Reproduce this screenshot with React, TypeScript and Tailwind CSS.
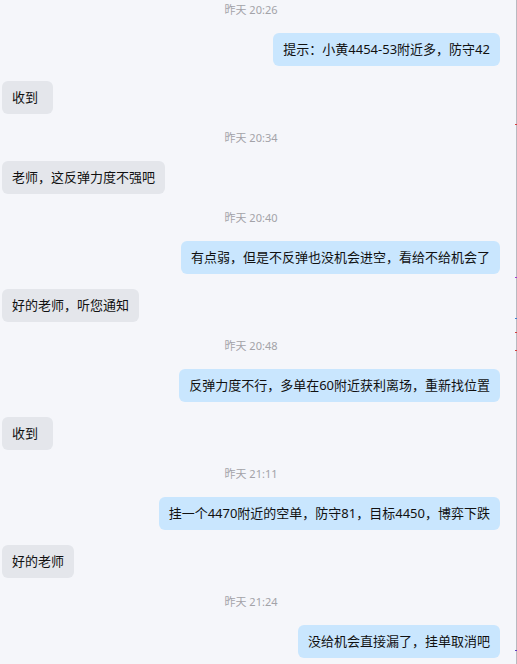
import React, { type ReactNode } from "react";

type Item =
    | { kind: "time"; text: string }
    | { kind: "sent"; text: string }
    | { kind: "recv"; text: string };

const items: Item[] = [
    { kind: "time", text: "昨天 20:26" },
    { kind: "sent", text: "提示：小黄4454-53附近多，防守42" },
    { kind: "recv", text: "收到" },
    { kind: "time", text: "昨天 20:34" },
    { kind: "recv", text: "老师，这反弹力度不强吧" },
    { kind: "time", text: "昨天 20:40" },
    { kind: "sent", text: "有点弱，但是不反弹也没机会进空，看给不给机会了" },
    { kind: "recv", text: "好的老师，听您通知" },
    { kind: "time", text: "昨天 20:48" },
    { kind: "sent", text: "反弹力度不行，多单在60附近获利离场，重新找位置" },
    { kind: "recv", text: "收到" },
    { kind: "time", text: "昨天 21:11" },
    { kind: "sent", text: "挂一个4470附近的空单，防守81，目标4450，博弈下跌" },
    { kind: "recv", text: "好的老师" },
    { kind: "time", text: "昨天 21:24" },
    { kind: "sent", text: "没给机会直接漏了，挂单取消吧" },
];

const Row = ({ item }: { item: Item }): ReactNode => {
    if (item.kind === "time") {
        return (
            <div className="h-[17px] text-center text-[11px] leading-[17px] text-[#a3a3a8]">
                {item.text}
            </div>
        );
    }
    const sent = item.kind === "sent";
    return (
        <div className={sent ? "flex justify-end" : "flex justify-start"}>
            <div
                className={
                    sent
                        ? "h-[33px] rounded-md bg-[#c9e6fe] px-[10px] text-[13px] leading-[33px] text-[#111111] whitespace-nowrap"
                        : "h-[33px] min-w-[51px] rounded-md bg-[#e4e6eb] px-[10px] text-[13px] leading-[33px] text-[#111111] whitespace-nowrap"
                }
            >
                {item.text}
            </div>
        </div>
    );
};

export default function App(): ReactNode {
    return (
        <div
            className="relative flex h-[664px] w-[517px] overflow-hidden bg-[#f5f6fa]"
            style={{ fontFamily: '"Noto Sans", "Noto Sans CJK SC", sans-serif' }}
        >
            <div className="flex flex-1 flex-col gap-[15px] pt-[1px] pl-[2px] pr-[16px]">
                {items.map((item, i) => (
                    <Row key={i} item={item} />
                ))}
            </div>
            <div className="w-px bg-[#b9b9c0]" />
            {/* scrollbar markers */}
            <div className="absolute right-0 top-[124px] h-px w-[2px] bg-[#d04040]" />
            <div className="absolute right-0 top-[277px] h-px w-[2px] bg-[#a040d0]" />
            <div className="absolute right-0 top-[318px] h-px w-[2px] bg-[#4080d0]" />
            <div className="absolute right-0 top-[332px] h-px w-[2px] bg-[#d04040]" />
            <div className="absolute right-0 top-[350px] h-px w-[2px] bg-[#d04040]" />
            <div className="absolute right-0 top-[650px] h-px w-[2px] bg-[#6040c0]" />
        </div>
    );
}
